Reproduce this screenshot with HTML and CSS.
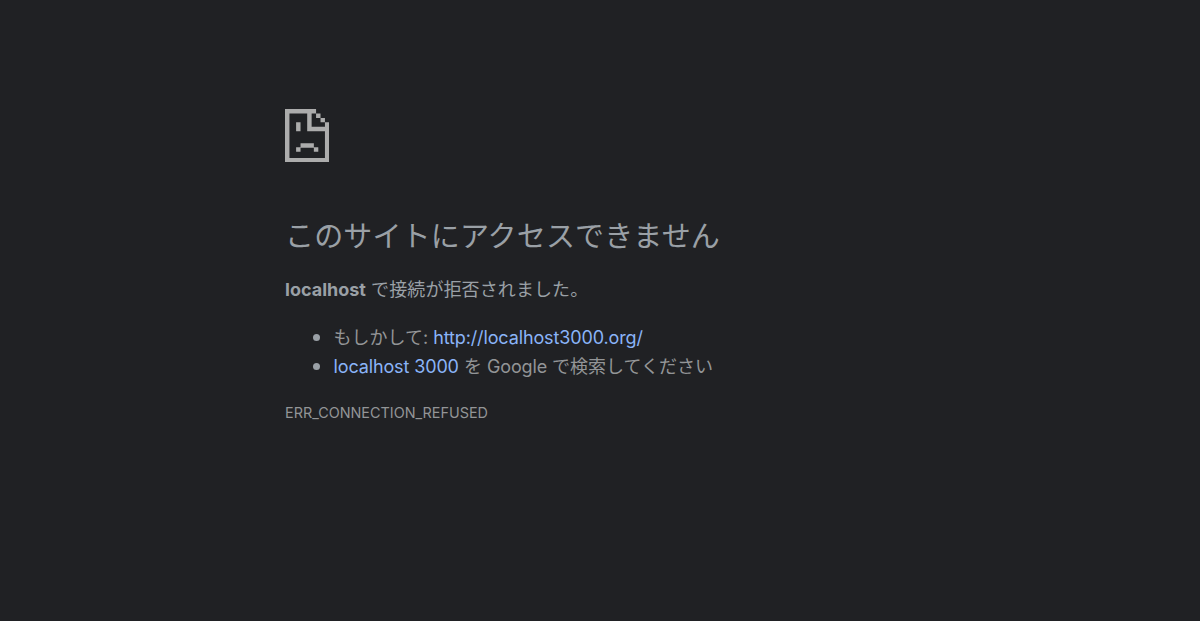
FILE: index.html
```html
<!DOCTYPE html>
<html lang="ja">
<head>
  <meta charset="UTF-8" />
  <meta name="viewport" content="width=device-width, initial-scale=1.0"/>
  <title>localhost</title>
  <link rel="stylesheet" href="styles.css">
</head>
<body>
  <main class="error-page">
    <svg class="error-icon" viewBox="0 0 20 24" preserveAspectRatio="none" aria-hidden="true">
      <path d="M0 0h14v2h2v2h2v2h2v18H0zM2 2v20h16V10h-8V2zM12 2v6h6V6h-2V4h-2V2z" fill-rule="evenodd"/>
      <path d="M5 6h2v4H5zM7 15.4h6v2H7zM5 17.2h2v2H5zM13 17.2h2v2h-2z"/>
    </svg>

    <h1>このサイトにアクセスできません</h1>
    <p class="summary"><strong>localhost</strong> で接続が拒否されました。</p>

    <ul class="suggestions">
      <li>もしかして: <a href="http://localhost3000.org/">http://localhost3000.org/</a></li>
      <li><a href="#">localhost 3000</a> を <span class="engine">Google</span> で検索してください</li>
    </ul>

    <div class="error-code">ERR_CONNECTION_REFUSED</div>
  </main>
</body>
</html>
```
FILE: styles.css
```css
* {
  margin: 0;
  padding: 0;
  box-sizing: border-box;
}

body {
  min-height: 100vh;
  background: #202124;
  color: #9aa0a6;
  font-family: Inter, "Noto Sans CJK JP", sans-serif;
  font-size: 18px;
  line-height: 29px;
}

.error-page {
  width: 630px;
  margin: 0 auto;
  padding-top: 109px;
}

.error-icon {
  display: block;
  width: 44.4px;
  height: 53.4px;
  fill: #acacac;
}

h1 {
  margin-top: 55.6px;
  font-size: 29px;
  font-weight: 400;
  line-height: 37px;
  letter-spacing: 0.15px;
}

.summary {
  margin-top: 20px;
  letter-spacing: 0.1px;
}

.summary strong {
  letter-spacing: 0;
}

.suggestions {
  margin-top: 19px;
  padding-left: 48.5px;
  color: #939597;
  list-style: none;
}

.suggestions li::before {
  content: "";
  display: inline-block;
  width: 7px;
  height: 7px;
  margin-left: -21px;
  margin-right: 14px;
  border-radius: 50%;
  background: #9aa0a6;
  vertical-align: 3px;
}

a {
  color: #8ab4f8;
  text-decoration: none;
  letter-spacing: -0.13px;
}

.engine {
  letter-spacing: -0.15px;
}

.error-code {
  margin-top: 17px;
  color: #939597;
  font-size: 14.4px;
}
```
